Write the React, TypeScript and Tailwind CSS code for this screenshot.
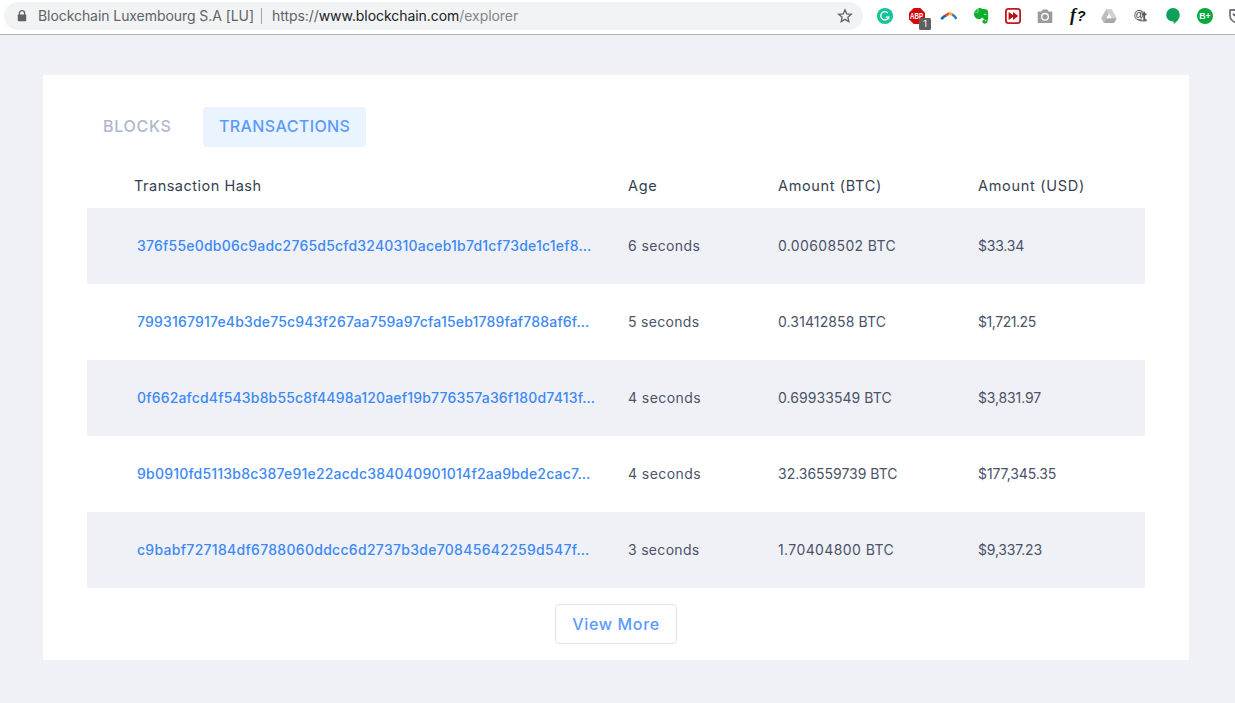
import type { ReactNode } from 'react';

type Cell = { text: string; tracking: string };
type Row = { hash: Cell; age: Cell; btc: Cell; usd: Cell };

const rows: Row[] = [
  {
    hash: { text: '376f55e0db06c9adc2765d5cfd3240310aceb1b7d1cf73de1c1ef8…', tracking: 'tracking-[0.21px]' },
    age: { text: '6 seconds', tracking: 'tracking-[0.38px]' },
    btc: { text: '0.00608502 BTC', tracking: 'tracking-[0.36px]' },
    usd: { text: '$33.34', tracking: 'tracking-[-0.2px]' },
  },
  {
    hash: { text: '7993167917e4b3de75c943f267aa759a97cfa15eb1789faf788af6f…', tracking: 'tracking-[0.175px]' },
    age: { text: '5 seconds', tracking: 'tracking-[0.3px]' },
    btc: { text: '0.31412858 BTC', tracking: 'tracking-[0.12px]' },
    usd: { text: '$1,721.25', tracking: 'tracking-[-0.45px]' },
  },
  {
    hash: { text: '0f662afcd4f543b8b55c8f4498a120aef19b776357a36f180d7413f…', tracking: 'tracking-[0.175px]' },
    age: { text: '4 seconds', tracking: 'tracking-[0.42px]' },
    btc: { text: '0.69933549 BTC', tracking: 'tracking-[0.06px]' },
    usd: { text: '$3,831.97', tracking: 'tracking-[-0.15px]' },
  },
  {
    hash: { text: '9b0910fd5113b8c387e91e22acdc384040901014f2aa9bde2cac7…', tracking: 'tracking-[0.21px]' },
    age: { text: '4 seconds', tracking: 'tracking-[0.42px]' },
    btc: { text: '32.36559739 BTC', tracking: 'tracking-[-0.02px]' },
    usd: { text: '$177,345.35', tracking: 'tracking-[-0.1px]' },
  },
  {
    hash: { text: 'c9babf727184df6788060ddcc6d2737b3de70845642259d547f…', tracking: 'tracking-[0.29px]' },
    age: { text: '3 seconds', tracking: 'tracking-[0.3px]' },
    btc: { text: '1.70404800 BTC', tracking: 'tracking-[0.4px]' },
    usd: { text: '$9,337.23', tracking: 'tracking-[-0.2px]' },
  },
];

function Ext({ children }: { children: ReactNode }) {
  return (
    <svg className="h-6 w-6 shrink-0 overflow-visible" viewBox="0 0 24 24">
      {children}
    </svg>
  );
}

function Extensions() {
  return (
    <div className="ml-2.5 flex shrink-0 gap-2">
      <Ext>
        <circle cx="12" cy="12" r="8.1" fill="#15c39a" />
        <path d="M14.9 9A4.1 4.1 0 1 0 15.7 13.2H12.8" fill="none" stroke="#fff" strokeWidth="1.3" />
        <path d="M15.7 12.6v2.6" stroke="#fff" strokeWidth="1.1" />
      </Ext>
      <Ext>
        <path d="M8.7 4h6.6L20 8.7v6.6L15.3 20H8.7L4 15.3V8.7z" fill="#d4080b" />
        <text x="11.5" y="14.8" textAnchor="middle" textLength="13" lengthAdjust="spacingAndGlyphs" fontFamily="Liberation Sans" fontWeight="700" fontSize="8.4" fill="#fff">ABP</text>
        <rect x="14" y="14" width="12" height="12" rx="1.5" fill="#5f6062" />
        <text x="20.2" y="23.4" textAnchor="middle" fontFamily="Inter" fontSize="9" fill="#fff">1</text>
      </Ext>
      <Ext>
        <path d="M4.2 15.2Q6.8 12.6 9.3 11.2" fill="none" stroke="#1b62ad" strokeWidth="2.6" />
        <path d="M8.6 11.6Q10.6 9.8 12.5 9.4" fill="none" stroke="#f0522b" strokeWidth="2.6" />
        <path d="M12.2 9.4Q14.2 9.2 15.8 11" fill="none" stroke="#fbb827" strokeWidth="3" />
        <path d="M15.4 10.5Q18 12.4 19.4 14.8" fill="none" stroke="#2a7ac4" strokeWidth="2.4" />
      </Ext>
      <Ext>
        <path d="M9.3 4.3C10 3.7 12.5 3.9 13 5c2.5.1 5 .1 5.6 1.3 1 3 .8 8.5-.3 12-.5 1.5-3.9 2.1-4.7.3-.6-1.6.2-3.2 2.2-3.2-.8-.8-2.2-.7-2.8-2.1-.8 2.1-3 2-4.7 1.5-2.7-.8-3.6-4.2-3.2-6.3h3.3c.8 0 .9-.3.9-1z" fill="#0cb028" />
        <path d="M8.6 4.2 4.9 8.2h3.500c.3 0 .4-.1.4-.4z" fill="#0cb028" />
        <path d="M15.2 10.8c.2-.9 1.5-1 2 .2M17.2 16.6h-1.400" fill="none" stroke="#fff" strokeWidth=".9" />
      </Ext>
      <Ext>
        <rect x="4.9" y="4.9" width="14.2" height="14.2" rx="2.6" fill="#fff" stroke="#c6161d" strokeWidth="1.8" />
        <path d="M7.600 7.900 12 11V7.900l5.200 4.100-5.200 4.100V13l-4.400 3.100z" fill="#b90e15" />
      </Ext>
      <Ext>
        <path d="M5.500 7.500h3l1.300-2h4.400l1.300 2h3a.8.8 0 0 1 .8.8v9.900a.8.8 0 0 1-.8.8h-13a.8.8 0 0 1-.8-.8V8.300a.8.8 0 0 1 .8-.8z" fill="#9b9b9b" />
        <circle cx="12" cy="12.800" r="3.300" fill="none" stroke="#fff" strokeWidth="1.300" />
      </Ext>
      <Ext>
        <text x="5" y="16.500" fontFamily="Liberation Serif" fontStyle="italic" fontWeight="700" fontSize="18" fill="#111">f</text>
        <text x="11.700" y="16.500" fontFamily="Liberation Sans" fontStyle="italic" fontWeight="700" fontSize="14.500" fill="#111">?</text>
      </Ext>
      <Ext>
        <path d="M9.400 5h5.200l5.200 9.200h-5.100z" fill="#d0d0d0" />
        <path d="M9.400 5 4.100 14.200 6.800 19l5.200-9.200z" fill="#bdbdbd" />
        <path d="M9.300 14.200h10.500L17.200 19H6.800z" fill="#a8a8a8" />
        <path d="m12 9.800 2.600 4.400H9.400z" fill="#fff" />
      </Ext>
      <Ext>
        <text x="4.500" y="14.300" fontFamily="Liberation Sans" fontSize="10.500" fill="#333">@</text>
        <path d="M15.200 7.800v7.700q.8.800 1.800 0M12.800 10.300h4.700" fill="none" stroke="#555" strokeWidth="1.800" />
        <path d="M8.500 15.200q4 2.400 9.500 1" fill="none" stroke="#777" strokeWidth="1.600" />
      </Ext>
      <Ext>
        <path d="M12 4a6.800 6.800 0 0 1 6.800 6.800c0 4-3.200 7.300-6.100 9.200v-2.400C8.500 17.600 5.200 14.800 5.200 10.800A6.800 6.800 0 0 1 12 4z" fill="#0fa15a" />
      </Ext>
      <Ext>
        <circle cx="12" cy="12" r="8" fill="#05a93f" />
        <text x="12" y="15.300" textAnchor="middle" textLength="11.400" lengthAdjust="spacingAndGlyphs" fontFamily="Liberation Sans" fontWeight="700" fontSize="9" fill="#fff">B+</text>
      </Ext>
      <Ext>
        <path d="M5 6h14v5.500a7 7 0 0 1-14 0z" fill="#fff" stroke="#777a7f" strokeWidth="1.800" strokeLinejoin="round" />
        <path d="m8 9.800 4 3.600 4-3.600" fill="none" stroke="#666a70" strokeWidth="2" />
      </Ext>
    </div>
  );
}

function BrowserBar() {
  return (
    <header className="flex h-[35px] items-start overflow-hidden border-b border-[#b4b5b7] bg-white pt-0.5 pl-1">
      <div className="flex h-7 w-[859px] shrink-0 items-center rounded-full bg-[#f1f3f4] pr-2.5 pl-3 text-[14px] text-[#5f6368]">
        <svg className="h-4 w-3 shrink-0" viewBox="0 0 12 16">
          <path d="M3.400 7V5.200a2.600 2.600 0 0 1 5.200 0V7" fill="none" stroke="#5f6368" strokeWidth="1.300" />
          <rect x="1.800" y="6.400" width="8.400" height="6.800" rx=".9" fill="#5f6368" />
        </svg>
        <span className="ml-2.5 w-[223px] shrink-0 pb-px whitespace-nowrap tracking-[-0.068px]">Blockchain Luxembourg S.A [LU]</span>
        <span className="h-4 w-px bg-[#a1a4a8]" />
        <span className="ml-[10px] pb-px whitespace-nowrap tracking-[-0.058px]">
          https://<span className="text-[#202124]">www.blockchain.com</span>
          <span className="text-[#80868b]">/explorer</span>
        </span>
        <svg className="ml-auto h-4 w-4" viewBox="0 0 16 16">
          <path d="m8 1.800 1.750 4.150 4.500.4-3.400 2.950 1 4.400L8 11.350 4.150 13.700l1-4.400-3.400-2.950 4.500-.4z" fill="none" stroke="#5f6368" strokeWidth="1.300" />
        </svg>
      </div>
      <div className="flex h-7 items-center">
        <Extensions />
      </div>
    </header>
  );
}

const grid = 'grid grid-cols-[541px_150px_200px_1fr] items-center';

export default function App() {
  return (
    <div className="h-[703px] overflow-hidden bg-[#f0f1f7] font-['Inter',sans-serif]">
      <BrowserBar />
      <main className="mt-10 mr-[46px] ml-[43px] h-[585px] bg-white px-11 pt-8">
        <div className="flex h-10 items-center text-[16px] font-medium">
          <button className="h-10 w-[116px] pb-0.5 pl-4 text-left tracking-[0.72px] text-[#b1b8cd]">BLOCKS</button>
          <button className="h-10 w-[163px] rounded bg-[#e9f4ff] pb-0.5 pl-4 text-left tracking-[0.4px] text-[#5b9bff]">TRANSACTIONS</button>
        </div>
        <div className={`${grid} mt-[17px] h-11 text-[14.5px] text-[#353f52]`}>
          <span className="pl-[47px] tracking-[0.5px]">Transaction Hash</span>
          <span className="tracking-[0.7px]">Age</span>
          <span className="tracking-[0.64px]">Amount (BTC)</span>
          <span className="tracking-[0.7px]">Amount (USD)</span>
        </div>
        <div>
          {rows.map((r) => (
            <div key={r.hash.text} className={`${grid} h-[76px] pb-0.5 text-[14px] text-[#4a5368] odd:bg-[#f0f1f7] even:bg-white`}>
              <a className={`pl-[50px] font-medium whitespace-nowrap text-[#3d89f5] ${r.hash.tracking}`}>{r.hash.text}</a>
              <span className={r.age.tracking}>{r.age.text}</span>
              <span className={r.btc.tracking}>{r.btc.text}</span>
              <span className={r.usd.tracking}>{r.usd.text}</span>
            </div>
          ))}
        </div>
        <button className="mx-auto mt-4 block h-10 w-[122px] rounded border border-[#dfe3eb] text-[16px] font-medium tracking-[0.68px] text-[#5b9bff]">
          View More
        </button>
      </main>
    </div>
  );
}
